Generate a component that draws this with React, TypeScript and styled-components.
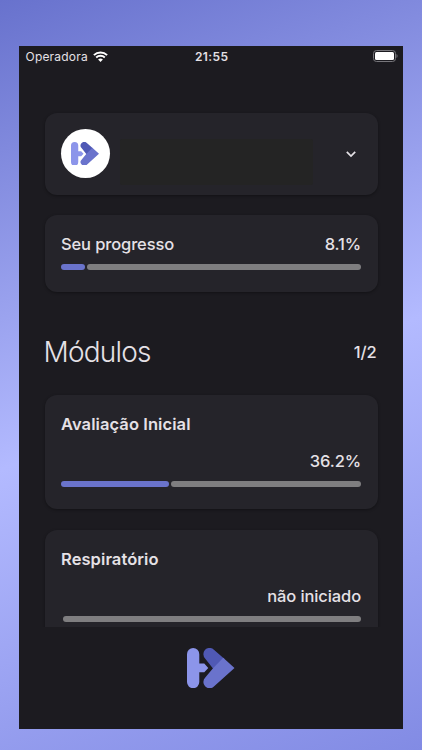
import styled, { createGlobalStyle } from 'styled-components';

const colors = {
  background: '#1c1b20',
  surface: '#25242a',
  text: '#e5e1e6',
  primary: '#6a73cb',
  track: '#7f7e80',
};

const GlobalStyle = createGlobalStyle`
  * {
    box-sizing: border-box;
  }
  body {
    margin: 0;
    font-family: Inter, 'Liberation Sans', sans-serif;
    color: ${colors.text};
  }
`;

const Backdrop = styled.div`
  width: 422px;
  height: 750px;
  padding: 46px 19px 21px;
  background: linear-gradient(160deg, #6872cd 0%, #b3baff 52%, #828be4 100%);
`;

const Phone = styled.main`
  display: flex;
  flex-direction: column;
  width: 384px;
  height: 683px;
  background-color: ${colors.background};
`;

const StatusBar = styled.header`
  display: grid;
  grid-template-columns: 1fr auto 1fr;
  align-items: center;
  height: 21px;
  padding: 0 5px 0 6.5px;
  font-size: 12px;
  line-height: 21px;
`;

const Carrier = styled.div`
  display: flex;
  align-items: center;
  gap: 5px;
  letter-spacing: 0.2px;
`;

const Clock = styled.time`
  font-weight: 600;
  letter-spacing: 0.45px;
`;

const BatteryIcon = styled.svg`
  justify-self: end;
  margin-top: -1px;
`;

const Content = styled.div`
  flex: none;
  display: flex;
  flex-direction: column;
  height: 560px;
  padding: 45.5px 25.5px 0;
  overflow: hidden;
`;

const Card = styled.section<{ $height: number }>`
  flex: none;
  height: ${({ $height }) => $height}px;
  margin-bottom: 20.5px;
  padding: 17px 16.5px 0;
  border-radius: 12px;
  background-color: ${colors.surface};
  box-shadow: 0 1px 3px rgba(0, 0, 0, 0.35);
`;

const ProfileCard = styled(Card)`
  display: flex;
  align-items: center;
  padding: 0 20px 0 16px;
`;

const Avatar = styled.div`
  display: flex;
  align-items: center;
  justify-content: center;
  width: 49.5px;
  height: 49.5px;
  border-radius: 50%;
  background-color: #fff;
`;

const HiddenName = styled.div`
  width: 193px;
  height: 46px;
  margin: 17px auto 0 10px;
  border-radius: 2px;
  background-color: #242424;
`;

const Row = styled.div`
  display: flex;
  align-items: center;
  justify-content: space-between;
`;

const Label = styled.span`
  font-size: 16.5px;
  font-weight: 450;
  line-height: 24px;
  letter-spacing: -0.12px;
`;

const CardTitle = styled.h2`
  margin: 0 0 13px;
  font-size: 16.5px;
  font-weight: 600;
  line-height: 24px;
  letter-spacing: 0.08px;
`;

const Status = styled(Label)`
  display: block;
  text-align: right;
`;

const Bar = styled.div`
  display: flex;
  gap: 2px;
  height: 6px;
  margin-top: 8px;
`;

const Fill = styled.div`
  border-radius: 3px;
  background-color: ${colors.primary};
`;

const Track = styled.div`
  flex: 1;
  border-radius: 3px;
  background-color: ${colors.track};
`;

const SectionHeader = styled(Row)`
  flex: none;
  height: 40px;
  margin: 19px 0 23.5px;
  padding-right: 1px;
`;

const SectionTitle = styled.h1`
  margin: 0 0 0 -1px;
  font-size: 28px;
  font-weight: 340;
  line-height: 40px;
  letter-spacing: -0.8px;
`;

const Footer = styled.footer`
  flex: 1;
  display: flex;
  justify-content: center;
  padding-top: 21px;
`;

const Logo = ({ width }: { width: number }) => (
  <svg width={width} height={(width * 121) / 143} viewBox="0 0 143 121">
    <path
      d="M0 18.5a18.5 18.5 0 0 1 37 0V47h15l12 13-12 13H37v29.5a18.5 18.5 0 0 1-37 0Z"
      fill="#8c95ea"
    />
    <path
      d="M55 32A18.5 18.5 0 0 1 81 5L113 33 80 64Z"
      fill="#5059b5"
    />
    <path
      d="M109 29 143 60 81 116A18.5 18.5 0 0 1 55 89L79 60Z"
      fill="#6a73cc"
    />
  </svg>
);

const WifiIcon = () => (
  <svg width="15" height="11" viewBox="0 0 15 11" fill="none">
    <path d="M.9 4.1a9.5 9.5 0 0 1 13.2 0" stroke="#fff" strokeWidth="2" />
    <path d="M3.2 6.5a6.2 6.2 0 0 1 8.6 0" stroke="#fff" strokeWidth="1.8" />
    <path d="M5.1 8.6a3.5 3.5 0 0 1 4.8 0L7.5 11Z" fill="#fff" />
  </svg>
);

const Battery = () => (
  <BatteryIcon width="25" height="12" viewBox="0 0 25 12">
    <rect x=".5" y=".5" width="22" height="11" rx="3" fill="none" stroke="#77767b" />
    <rect x="2" y="2" width="19" height="8" rx="1.5" fill="#fff" />
    <path d="M23.5 4v4c1.4-.5 1.4-3.5 0-4Z" fill="#77767b" />
  </BatteryIcon>
);

const Chevron = () => (
  <svg width="14" height="14" viewBox="0 0 14 14" fill="none">
    <path d="m2.8 4.8 4.2 4.2 4.2-4.2" stroke={colors.text} strokeWidth="1.7" />
  </svg>
);

const ProgressBar = ({ percent }: { percent: number }) => (
  <Bar>
    <Fill style={{ width: `calc((100% - 2px) * ${percent / 100})` }} />
    <Track />
  </Bar>
);

type ModuleProps = {
  title: string;
  status: string;
  percent: number;
};

const Module = ({ title, status, percent }: ModuleProps) => (
  <Card $height={114}>
    <CardTitle>{title}</CardTitle>
    <Status>{status}</Status>
    <ProgressBar percent={percent} />
  </Card>
);

const App = () => (
  <>
    <GlobalStyle />
    <Backdrop>
      <Phone>
        <StatusBar>
          <Carrier>
            Operadora
            <WifiIcon />
          </Carrier>
          <Clock>21:55</Clock>
          <Battery />
        </StatusBar>
        <Content>
          <ProfileCard $height={82}>
            <Avatar>
              <Logo width={28} />
            </Avatar>
            <HiddenName />
            <Chevron />
          </ProfileCard>
          <Card $height={77}>
            <Row>
              <Label>Seu progresso</Label>
              <Label>8.1%</Label>
            </Row>
            <ProgressBar percent={8.1} />
          </Card>
          <SectionHeader>
            <SectionTitle>Módulos</SectionTitle>
            <Label>1/2</Label>
          </SectionHeader>
          <Module title="Avaliação Inicial" status="36.2%" percent={36.2} />
          <Module title="Respiratório" status="não iniciado" percent={0} />
        </Content>
        <Footer>
          <Logo width={47.5} />
        </Footer>
      </Phone>
    </Backdrop>
  </>
);

export default App;
